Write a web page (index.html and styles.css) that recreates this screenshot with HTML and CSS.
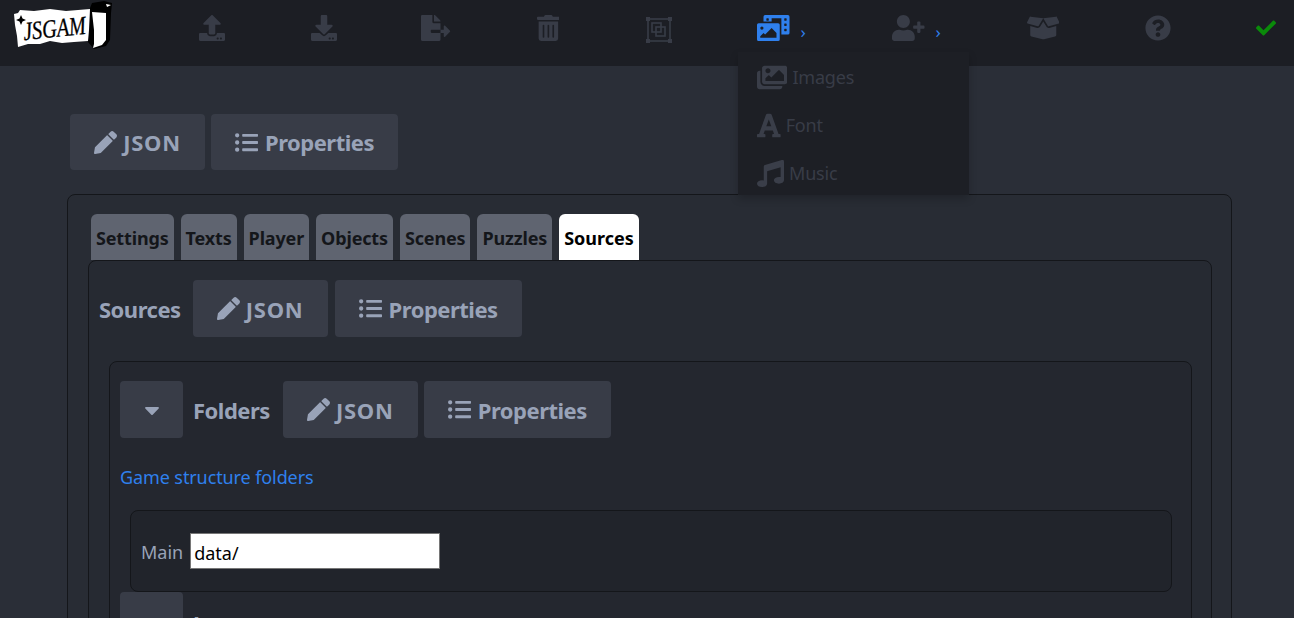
FILE: index.html
```html
<!DOCTYPE html>
<html>
<head>
	<meta charset="UTF-8">
	<title>JSGAM editor</title>
	<link rel="stylesheet" href="styles.css">
</head>
<body>
<svg class="defs" width="0" height="0">
	<symbol id="i-pencil" viewBox="0 0 512 512"><path d="M497.9 142.1l-46.1 46.1c-4.7 4.7-12.3 4.7-17 0l-111-111c-4.7-4.7-4.7-12.3 0-17l46.1-46.1c18.7-18.7 49.1-18.7 67.9 0l60.1 60.1c18.8 18.7 18.8 49.1 0 67.9zM284.2 99.8L21.6 362.4.4 483.9c-2.9 16.4 11.4 30.6 27.8 27.8l121.5-21.3 262.6-262.6c4.7-4.7 4.7-12.3 0-17l-111-111c-4.8-4.7-12.4-4.7-17.1 0z"/></symbol>
	<symbol id="i-list" viewBox="0 0 512 512"><path d="M48 48a48 48 0 1 0 48 48 48 48 0 0 0-48-48zm0 160a48 48 0 1 0 48 48 48 48 0 0 0-48-48zm0 160a48 48 0 1 0 48 48 48 48 0 0 0-48-48zm448 16H176a16 16 0 0 0-16 16v32a16 16 0 0 0 16 16h320a16 16 0 0 0 16-16v-32a16 16 0 0 0-16-16zm0-320H176a16 16 0 0 0-16 16v32a16 16 0 0 0 16 16h320a16 16 0 0 0 16-16V80a16 16 0 0 0-16-16zm0 160H176a16 16 0 0 0-16 16v32a16 16 0 0 0 16 16h320a16 16 0 0 0 16-16v-32a16 16 0 0 0-16-16z"/></symbol>
	<symbol id="i-caret" viewBox="0 0 320 512"><path d="M31.3 192h257.3c17.8 0 26.7 21.5 14.1 34.1L174.1 354.8c-7.8 7.8-20.5 7.8-28.3 0L17.2 226.1C4.6 213.5 13.5 192 31.3 192z"/></symbol>
</svg>

<header class="topbar">
	<a class="logo" href="#">
		<svg width="100" height="50" viewBox="0 0 100 50">
			<path class="logo-cap" d="M74 42 L76 8 L78 3 L90 1 L98 3 L97 13 L96 40 L92 46 L80 49 Z"/>
			<path class="logo-paper" d="M0 14 L4 13 L6 10 L20 11 L36 9 L52 11 L64 10 L76 9 L75 30 L74 41 L60 42 L48 43 L36 41 L26 44 L14 44 L4 47 L3 36 L1 25 Z"/>
			<path class="logo-paper" d="M78 12 L92 13 L92 40 L88 45 L79 48 L80 44 L80 30 Z"/>
			<path class="logo-paper" d="M92 4 L97 5 L93 7 Z"/>
			<path class="logo-star" d="M7 15 L8.500 18.500 L12 20 L8.500 21.500 L7 25 L5.500 21.500 L2 20 L5.500 18.500 Z"/>
			<text class="logo-text" x="9" y="37" textLength="63" lengthAdjust="spacingAndGlyphs" transform="rotate(-6 40 30)">JSGAM</text>
		</svg>
	</a>
	<nav class="toolbar">
		<button class="tool"><svg class="tool-icon" viewBox="0 0 512 512"><path d="M296 384h-80c-13.3 0-24-10.7-24-24V192h-87.700c-17.800 0-26.700-21.500-14.100-34.100L242.300 5.700c7.500-7.500 19.800-7.500 27.300 0l152.200 152.200c12.600 12.600 3.700 34.100-14.100 34.100H320v168c0 13.300-10.700 24-24 24zm216-8v112c0 13.300-10.700 24-24 24H24c-13.300 0-24-10.700-24-24V376c0-13.300 10.700-24 24-24h136v8c0 30.900 25.100 56 56 56h80c30.900 0 56-25.100 56-56v-8h136c13.300 0 24 10.700 24 24zm-124 88c0-11-9-20-20-20s-20 9-20 20 9 20 20 20 20-9 20-20zm64 0c0-11-9-20-20-20s-20 9-20 20 9 20 20 20 20-9 20-20z"/></svg></button>
		<button class="tool"><svg class="tool-icon" viewBox="0 0 512 512"><path d="M216 0h80c13.300 0 24 10.700 24 24v168h87.700c17.800 0 26.700 21.500 14.100 34.100L269.700 378.300c-7.500 7.500-19.800 7.500-27.300 0L90.100 226.100c-12.600-12.600-3.700-34.100 14.100-34.100H192V24c0-13.300 10.700-24 24-24zm296 376v112c0 13.300-10.700 24-24 24H24c-13.300 0-24-10.700-24-24V376c0-13.300 10.700-24 24-24h146.700l49 49c20.100 20.100 52.500 20.100 72.600 0l49-49H488c13.300 0 24 10.700 24 24zm-124 88c0-11-9-20-20-20s-20 9-20 20 9 20 20 20 20-9 20-20zm64 0c0-11-9-20-20-20s-20 9-20 20 9 20 20 20 20-9 20-20z"/></svg></button>
		<button class="tool"><svg class="tool-icon" viewBox="0 0 576 512"><path d="M384 121.900c0-6.300-2.500-12.400-7-16.900L279.100 7c-4.500-4.500-10.600-7-17-7H256v128h128zM571 308l-95.700-96.400c-10.100-10.100-27.400-3-27.400 11.300V288h-64v64h64v65.200c0 14.300 17.300 21.400 27.400 11.300L571 332c6.600-6.600 6.600-17.400 0-24zm-379 28v-32c0-8.800 7.200-16 16-16h176V160H248c-13.200 0-24-10.800-24-24V0H24C10.700 0 0 10.700 0 24v464c0 13.300 10.700 24 24 24h336c13.300 0 24-10.700 24-24V352H208c-8.800 0-16-7.200-16-16z"/></svg></button>
		<button class="tool"><svg class="tool-icon" viewBox="0 0 448 512"><path d="M32 464a48 48 0 0 0 48 48h288a48 48 0 0 0 48-48V128H32zm272-256a16 16 0 0 1 32 0v224a16 16 0 0 1-32 0zm-96 0a16 16 0 0 1 32 0v224a16 16 0 0 1-32 0zm-96 0a16 16 0 0 1 32 0v224a16 16 0 0 1-32 0zM432 32H312l-9.400-18.700A24 24 0 0 0 281.100 0H166.800a23.720 23.720 0 0 0-21.400 13.300L136 32H16A16 16 0 0 0 0 48v32a16 16 0 0 0 16 16h416a16 16 0 0 0 16-16V48a16 16 0 0 0-16-16z"/></svg></button>
		<button class="tool"><svg class="tool-icon tool-frame" viewBox="0 0 26 26">
			<rect x="2" y="2" width="22" height="22"/><rect x="6" y="6" width="9" height="9"/><rect x="10" y="10" width="9" height="9"/>
			<rect class="corner" x="0" y="0" width="4" height="4"/><rect class="corner" x="22" y="0" width="4" height="4"/><rect class="corner" x="0" y="22" width="4" height="4"/><rect class="corner" x="22" y="22" width="4" height="4"/>
		</svg></button>
		<div class="tool tool-open">
			<svg class="tool-icon tool-active" viewBox="0 0 640 512"><path d="M608 0H160a32 32 0 0 0-32 32v96h160V64h192v320h128a32 32 0 0 0 32-32V32a32 32 0 0 0-32-32zM232 103a9 9 0 0 1-9 9h-30a9 9 0 0 1-9-9V73a9 9 0 0 1 9-9h30a9 9 0 0 1 9 9zm352 208a9 9 0 0 1-9 9h-30a9 9 0 0 1-9-9v-30a9 9 0 0 1 9-9h30a9 9 0 0 1 9 9zm0-104a9 9 0 0 1-9 9h-30a9 9 0 0 1-9-9v-30a9 9 0 0 1 9-9h30a9 9 0 0 1 9 9zm0-104a9 9 0 0 1-9 9h-30a9 9 0 0 1-9-9V73a9 9 0 0 1 9-9h30a9 9 0 0 1 9 9zm-168 57H32a32 32 0 0 0-32 32v288a32 32 0 0 0 32 32h384a32 32 0 0 0 32-32V192a32 32 0 0 0-32-32zM96 224a32 32 0 1 1-32 32 32 32 0 0 1 32-32zm288 224H64v-32l64-64 32 32 128-128 96 96z"/></svg>
			<span class="chevron">›</span>
			<div class="menu">
				<a class="menu-item" href="#"><svg class="menu-icon" viewBox="0 0 576 512"><path d="M480 416v16c0 26.510-21.490 48-48 48H48c-26.510 0-48-21.490-48-48V176c0-26.510 21.490-48 48-48h16v208c0 44.112 35.888 80 80 80h336zm96-80V80c0-26.510-21.490-48-48-48H144c-26.510 0-48 21.490-48 48v256c0 26.510 21.490 48 48 48h384c26.510 0 48-21.490 48-48zM256 128c0 26.510-21.490 48-48 48s-48-21.490-48-48 21.490-48 48-48 48 21.490 48 48zm-96 144l55.515-55.515c4.686-4.686 12.284-4.686 16.971 0L272 256l135.515-135.515c4.686-4.686 12.284-4.686 16.971 0L512 208v112H160v-48z"/></svg>Images</a>
				<a class="menu-item" href="#"><svg class="menu-icon" viewBox="0 0 448 512"><path d="M432 416h-23.410L277.880 53.690A32 32 0 0 0 247.580 32h-47.160a32 32 0 0 0-30.300 21.690L39.410 416H16a16 16 0 0 0-16 16v32a16 16 0 0 0 16 16h128a16 16 0 0 0 16-16v-32a16 16 0 0 0-16-16h-19.600l23.300-64h152.600l23.300 64H304a16 16 0 0 0-16 16v32a16 16 0 0 0 16 16h128a16 16 0 0 0 16-16v-32a16 16 0 0 0-16-16zM176.850 272L224 142.510 271.150 272z"/></svg>Font</a>
				<a class="menu-item" href="#"><svg class="menu-icon" viewBox="0 0 512 512"><path d="M470.380 1.510L150.410 96A32 32 0 0 0 128 126.510v261.410A139 139 0 0 0 96 384c-53 0-96 28.660-96 64s43 64 96 64 96-28.660 96-64V214.320l256-75v184.610a138.400 138.400 0 0 0-32-3.930c-53 0-96 28.660-96 64s43 64 96 64 96-28.650 96-64V32a32 32 0 0 0-41.620-30.490z"/></svg>Music</a>
			</div>
		</div>
		<div class="tool tool-user">
			<svg class="tool-icon" viewBox="0 0 640 512"><path d="M624 208h-64v-64c0-8.800-7.200-16-16-16h-32c-8.800 0-16 7.200-16 16v64h-64c-8.800 0-16 7.200-16 16v32c0 8.800 7.200 16 16 16h64v64c0 8.800 7.200 16 16 16h32c8.800 0 16-7.200 16-16v-64h64c8.800 0 16-7.200 16-16v-32c0-8.800-7.200-16-16-16zm-400 48c70.700 0 128-57.300 128-128S294.700 0 224 0 96 57.300 96 128s57.300 128 128 128zm89.600 32h-16.700c-22.200 10.200-46.900 16-72.900 16s-50.600-5.800-72.900-16h-16.700C60.200 288 0 348.200 0 422.400V464c0 26.500 21.500 48 48 48h352c26.500 0 48-21.500 48-48v-41.600c0-74.200-60.200-134.400-134.400-134.400z"/></svg>
			<span class="chevron">›</span>
		</div>
		<button class="tool tool-box"><svg class="tool-icon" viewBox="0 0 640 512"><path d="M425.700 256c-16.900 0-32.800-9-41.400-23.400L320 126l-64.200 106.600c-8.700 14.500-24.600 23.500-41.500 23.500-4.500 0-9-.6-13.300-1.900L64 215v178c0 14.700 10 27.500 24.200 31l216.200 54.100c10.200 2.500 20.900 2.500 31 0L551.800 424c14.200-3.600 24.200-16.400 24.200-31V215l-137 39.100c-4.300 1.300-8.800 1.900-13.300 1.900zm212.600-112.200L586.800 41c-3.100-6.200-9.800-9.800-16.700-8.900L320 64l91.700 152.100c3.800 6.300 11.400 9.300 18.500 7.300l197.900-56.500c9.900-2.900 14.700-13.900 10.200-23.100zM53.200 41L1.700 143.800c-4.600 9.200.3 20.200 10.100 23l197.900 56.500c7.100 2 14.700-1 18.500-7.300L320 64 69.800 32.100c-6.900-.8-13.500 2.700-16.600 8.900z"/></svg></button>
		<button class="tool tool-help"><svg class="tool-icon" viewBox="0 0 512 512"><path d="M504 256c0 136.997-111.043 248-248 248S8 392.997 8 256C8 119.083 119.043 8 256 8s248 111.083 248 248zM262.655 90c-54.497 0-89.255 22.957-116.549 63.758-3.536 5.286-2.353 12.415 2.715 16.258l34.699 26.310c5.205 3.947 12.621 3.008 16.665-2.122 17.864-22.658 30.113-35.797 57.303-35.797 20.429 0 45.698 13.148 45.698 32.958 0 14.976-12.363 22.667-32.534 33.976C247.128 238.528 216 254.941 216 296v4c0 6.627 5.373 12 12 12h56c6.627 0 12-5.373 12-12v-1.333c0-28.462 83.186-29.647 83.186-106.667 0-58.002-60.165-102-116.531-102zM256 338c-25.365 0-46 20.635-46 46 0 25.364 20.635 46 46 46s46-20.636 46-46c0-25.365-20.635-46-46-46z"/></svg></button>
	</nav>
	<svg class="status-ok" viewBox="0 0 512 512"><path d="M173.898 439.404l-166.400-166.400c-9.997-9.997-9.997-26.206 0-36.204l36.203-36.204c9.997-9.998 26.207-9.998 36.204 0L192 312.690 432.095 72.596c9.997-9.997 26.207-9.997 36.204 0l36.203 36.204c9.997 9.997 9.997 26.206 0 36.204l-294.400 294.401c-9.998 9.997-26.207 9.997-36.204-.001z"/></svg>
</header>

<main class="page">
	<div class="row">
		<button class="btn"><svg class="btn-icon"><use href="#i-pencil"/></svg><span class="btn-json">JSON</span></button>
		<button class="btn btn-props"><svg class="btn-icon"><use href="#i-list"/></svg><span class="btn-text">Properties</span></button>
	</div>
	<section class="panel panel-root">
		<div class="tabs">
			<a class="tab" href="#">Settings</a>
			<a class="tab" href="#">Texts</a>
			<a class="tab" href="#">Player</a>
			<a class="tab" href="#">Objects</a>
			<a class="tab" href="#">Scenes</a>
			<a class="tab" href="#">Puzzles</a>
			<a class="tab tab-active" href="#">Sources</a>
		</div>
		<section class="panel panel-sources">
			<div class="row row-title">
				<span class="title">Sources</span>
				<button class="btn btn-tall"><svg class="btn-icon"><use href="#i-pencil"/></svg><span class="btn-json">JSON</span></button>
				<button class="btn btn-tall btn-props"><svg class="btn-icon"><use href="#i-list"/></svg><span class="btn-text">Properties</span></button>
			</div>
			<section class="panel panel-group">
				<div class="row row-title">
					<button class="btn btn-tall btn-caret"><svg class="caret-icon"><use href="#i-caret"/></svg></button>
					<span class="title">Folders</span>
					<button class="btn btn-tall"><svg class="btn-icon"><use href="#i-pencil"/></svg><span class="btn-json">JSON</span></button>
					<button class="btn btn-tall btn-props"><svg class="btn-icon"><use href="#i-list"/></svg><span class="btn-text">Properties</span></button>
				</div>
				<p class="hint">Game structure folders</p>
				<div class="panel panel-field">
					<label class="field-label" for="main-folder">Main</label>
					<input class="field-input" id="main-folder" type="text" value="data/">
				</div>
				<div class="row row-title">
					<button class="btn btn-tall btn-caret"><svg class="caret-icon"><use href="#i-caret"/></svg></button>
					<span class="title title-next">Languages</span>
				</div>
			</section>
		</section>
	</section>
</main>
</body>
</html>
```

FILE: styles.css
```css
html{overflow:hidden;height:100%;}
body{margin:0;background:#2a2e37;font-family:"Noto Sans",sans-serif;color:#99a3b8;}
button{font-family:inherit;}
.defs{position:absolute;}

/* top bar */
.topbar{display:flex;align-items:flex-start;height:66px;background:#1c1e24;}
.logo{display:block;width:156px;padding:0 0 0 14px;box-sizing:border-box;height:66px;}
.logo svg{display:block;}
.logo-paper{fill:#fff;}
.logo-cap{fill:#000;}
.logo-star{fill:#000;}
.logo-text{font:italic 400 26px "Liberation Serif",serif;fill:#000;stroke:#000;stroke-width:.3;}
.toolbar{display:flex;align-items:flex-start;}
.tool{position:relative;display:flex;align-items:center;justify-content:center;width:112px;height:56px;padding:0;border:0;background:none;}
.tool-icon{height:26px;fill:#383c47;}
.tool-frame{fill:none;stroke:#383c47;stroke-width:1.600;margin:3px 2px 0 0;}
.tool-frame .corner{fill:#383c47;stroke:none;}
.tool-active{fill:#2f80ed;}
.tool-open,.tool-user{justify-content:flex-start;width:135px;padding-left:19px;box-sizing:border-box;}
.tool-open{margin-left:22px;}
.tool-box{width:70px;}
.tool-help{width:160px;}
.chevron{margin:6px 0 0 11px;font-size:17px;line-height:1;color:#2f80ed;}
.status-ok{width:20px;height:20px;margin:18px 18px 0 auto;fill:#0a8a0a;}

/* dropdown of the pictures button */
.menu{position:absolute;z-index:10;top:52px;left:0;width:231px;height:143px;box-sizing:border-box;padding-top:1px;background:#1d1f25;box-shadow:0 4px 8px rgba(0,0,0,.2);}
.menu-item{display:flex;align-items:center;gap:5px;height:48px;padding-left:19px;font-size:18px;letter-spacing:-.2px;color:#383c47;text-decoration:none;}
.menu-icon{height:27px;fill:#3a3e49;}

/* page */
.page{padding:48px 62px 0 67px;}
.row{display:flex;gap:6px;padding-left:3px;}
.row-title{align-items:center;padding-left:0;}
.btn{display:flex;align-items:center;justify-content:center;gap:6px;width:135px;height:56px;padding:0;border:0;border-radius:4px;background:#383c47;color:#99a3b8;font-size:22px;font-weight:700;}
.btn-json{letter-spacing:.7px;}
.btn-text{letter-spacing:-.5px;}
.btn-props{width:187px;gap:7px;}
.btn-tall{height:57px;}
.btn-icon{width:23px;height:23px;fill:#99a3b8;}
.btn-caret{width:63px;}
.caret-icon{width:16px;height:24px;fill:#99a3b8;}
.title{font-size:22px;font-weight:700;letter-spacing:-.5px;}

.panel{border:1px solid #14161a;border-radius:8px;}
.panel-root{margin-top:24px;padding:19px 19px 0 20px;background:#282c34;}
.tabs{display:flex;gap:7px;padding-left:3px;}
.tab{display:block;height:46px;padding:0 5px;border-radius:6px 6px 0 0;background:#5f6470;color:#14161a;font-size:18px;font-weight:700;line-height:49px;letter-spacing:-.15px;text-decoration:none;}
.tab-active{letter-spacing:0;background:#fff;color:#000;}
.panel-sources{padding:19px 19px 0 10px;background:#262a32;}
.panel-sources>.row-title{gap:7px;}
.panel-sources>.row-title .title{margin-right:5px;}
.panel-group{margin:24px 0 0 10px;padding:19px 19px 0 10px;background:#24272f;}
.panel-group .row-title{gap:6px;}
.panel-group .btn-caret+.title{margin:0 7px 0 4px;}
.panel-group .btn-caret+.title-next{margin-top:5px;}
.hint{margin:25px 0 0;font-size:18px;line-height:28px;letter-spacing:-.1px;color:#2f80ed;}
.panel-field{display:flex;align-items:center;gap:7px;height:80px;margin:19px 0 0 10px;padding-left:10px;background:#21242b;}
.field-label{padding-top:2px;font-size:18px;}
.field-input{box-sizing:border-box;width:250px;height:36px;padding:3px 3px 0;border:1px solid #767676;border-radius:0;background:#fff;color:#000;font:18px "Noto Sans",sans-serif;}
```
